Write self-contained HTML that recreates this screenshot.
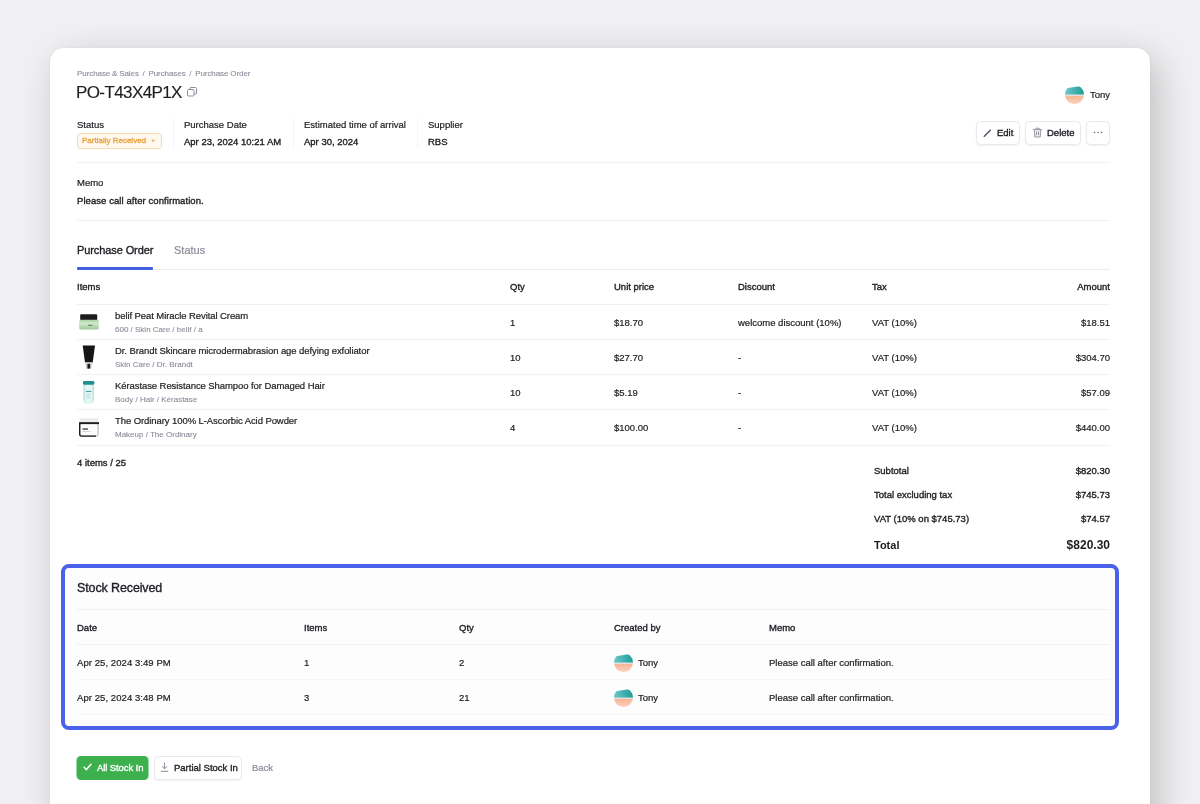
<!DOCTYPE html>
<html lang="en">
<head>
<meta charset="utf-8">
<title>Purchase Order PO-T43X4P1X</title>
<style>
*{box-sizing:border-box;margin:0;padding:0}
html,body{width:1200px;height:804px;overflow:hidden;background:#f0f0f2;font-family:"Liberation Sans",sans-serif;color:#1d1d22}
.card{position:absolute;left:50px;top:48px;width:1100px;height:900px;background:#fff;border-radius:14px;box-shadow:8px 10px 36px rgba(0,0,0,.2),0 0 3px rgba(0,0,0,.05)}
.t{position:absolute;white-space:nowrap;font-size:9.5px;line-height:12px;color:#1d1d22;-webkit-text-stroke:.2px currentColor}
.m{-webkit-text-stroke:.35px currentColor}
.g{color:#8b8b9a}
.s{font-size:8px;color:#8b8b9a;-webkit-text-stroke:.1px currentColor}
.hl{position:absolute;height:1px;background:#f1f1f3;left:77px;width:1033px}
.vl{position:absolute;width:1px;background:#f5f5f7;top:118px;height:30px}
.r{text-align:right;width:100px}
.btn{position:absolute;height:24px;border:1px solid #e9e9ed;border-radius:4.500px;background:#fff;box-shadow:0 1px 2px rgba(0,0,0,.06)}
.av{position:absolute;width:19px;height:19px;border-radius:50%;background:linear-gradient(180deg,#3aa5a6 0%,#5fc3c2 38%,#e8f2ee 47%,#f6c0a2 56%,#f6b99a 100%)}
svg{position:absolute;overflow:visible}
</style>
</head>
<body>
<div class="card"></div>
<div id="layer" style="position:absolute;left:0;top:0;width:1200px;height:804px;will-change:transform">
<svg width="0" height="0" style="left:0;top:0"><defs>
<clipPath id="avc"><circle cx="9.500" cy="9.500" r="9.500"/></clipPath>
<linearGradient id="avt" x1="0" y1="0" x2="1" y2="0"><stop offset="0" stop-color="#6fc8cb"/><stop offset=".55" stop-color="#3fb0ad"/><stop offset="1" stop-color="#1f9b96"/></linearGradient>
<linearGradient id="avp" x1="0" y1="0" x2="0" y2="1"><stop offset="0" stop-color="#f6b392"/><stop offset="1" stop-color="#fcd3bd"/></linearGradient>
<linearGradient id="jar" x1="0" y1="0" x2="0" y2="1"><stop offset="0" stop-color="#a6cfa2"/><stop offset=".35" stop-color="#d2e8ce"/><stop offset=".7" stop-color="#b5d8b0"/><stop offset="1" stop-color="#9fc99b"/></linearGradient>
<linearGradient id="bot" x1="0" y1="0" x2="1" y2="0"><stop offset="0" stop-color="#a5dad7"/><stop offset=".22" stop-color="#e6f6f5"/><stop offset=".78" stop-color="#e6f6f5"/><stop offset="1" stop-color="#a5dad7"/></linearGradient>
</defs></svg>

<!-- header -->
<div class="t s" style="left:77px;top:68px;word-spacing:-.3px;letter-spacing:-.07px">Purchase &amp; Sales&nbsp; /&nbsp; Purchases&nbsp; /&nbsp; Purchase Order</div>
<div class="t" style="left:76px;top:83px;font-size:17px;line-height:20px;letter-spacing:-.6px;-webkit-text-stroke:.15px currentColor">PO-T43X4P1X</div>
<svg style="left:187px;top:87px" width="10" height="10" viewBox="0 0 10 10" fill="none" stroke="#8b8b9a" stroke-width="1"><rect x=".5" y="2.5" width="6.5" height="6.5" rx="1"/><path d="M3 2.5V1.5a1 1 0 0 1 1-1h4.500a1 1 0 0 1 1 1V6a1 1 0 0 1-1 1H7"/></svg>

<svg style="left:1065px;top:85px" width="19" height="19" viewBox="0 0 19 19"><g clip-path="url(#avc)"><rect width="19" height="19" fill="#fff"/><path d="M0 3.600L19 .5V10H0z" fill="url(#avt)"/><rect y="10.400" width="19" height="9" fill="url(#avp)"/><rect y="9.500" width="19" height="1.200" fill="#dfe3e8"/></g></svg>
<div class="t" style="left:1090px;top:89px">Tony</div>

<div class="t" style="left:77px;top:119px">Status</div>
<div style="position:absolute;left:77px;top:133px;width:85px;height:16px;border:1px solid #f8dbb3;border-radius:3px;background:#fff8ef"></div>
<div class="t m" style="left:82px;top:135px;font-size:8px;color:#eaa544">Partially Received</div>
<svg style="left:150px;top:139px" width="6" height="4" viewBox="0 0 6 4"><path d="M1.100 .8h3.800L3 3.300z" fill="#ebaa4e"/></svg>
<div class="vl" style="left:173px"></div>
<div class="t" style="left:184px;top:119px">Purchase Date</div>
<div class="vl" style="left:293px"></div>
<div class="t" style="left:304px;top:119px">Estimated time of arrival</div>
<div class="vl" style="left:417px"></div>
<div class="t" style="left:428px;top:119px">Supplier</div>
<div class="t m" style="left:184px;top:136px">Apr 23, 2024 10:21 AM</div>
<div class="t m" style="left:304px;top:136px">Apr 30, 2024</div>
<div class="t m" style="left:428px;top:136px">RBS</div>

<!-- action buttons -->
<div class="btn" style="left:976px;top:121px;width:44px"></div>
<svg style="left:983px;top:128px" width="10" height="10" viewBox="0 0 10 10"><path d="M1.300 8.300L7.300 2.300" stroke="#5b5b66" stroke-width="1.500" stroke-linecap="round" fill="none"/><path d="M.7 9l.3-1.200.9.9z" fill="#5b5b66"/></svg>
<div class="t m" style="left:997px;top:127px">Edit</div>
<div class="btn" style="left:1025px;top:121px;width:56px"></div>
<svg style="left:1032px;top:127px" width="11" height="11" viewBox="0 0 11 11" fill="none" stroke="#9a9aa9" stroke-width="1"><path d="M2.200 2.500l.6 7.500h5.400l.6-7.500z" fill="#e9e9ee" stroke="none"/><path d="M1 2.500h9M3.800 2.500V1.200h3.400v1.300M2.200 2.500l.6 7.500h5.400l.6-7.500M4.500 4.500v3.500M6.500 4.500v3.500"/></svg>
<div class="t m" style="left:1047px;top:127px">Delete</div>
<div class="btn" style="left:1086px;top:121px;width:24px"></div>
<svg style="left:1093px;top:131px" width="10" height="3" viewBox="0 0 10 3" fill="#6b6b78"><circle cx="1.500" cy="1.500" r=".8"/><circle cx="5" cy="1.500" r=".8"/><circle cx="8.500" cy="1.500" r=".8"/></svg>

<div class="hl" style="top:162px"></div>
<div class="t" style="left:77px;top:177px">Memo</div>
<div class="t m" style="left:77px;top:195px;letter-spacing:.07px">Please call after confirmation.</div>
<div class="hl" style="top:220px"></div>

<!-- tabs -->
<div class="t m" style="left:77px;top:243px;font-size:11px;line-height:14px;letter-spacing:-.1px">Purchase Order</div>
<div class="t g" style="left:174px;top:243px;font-size:11px;line-height:14px">Status</div>
<div class="hl" style="top:269px;background:#ededf0"></div>
<div style="position:absolute;left:77px;top:266.500px;width:76px;height:3px;background:#4360df;border-radius:1px"></div>

<!-- items table -->
<div class="t m" style="left:77px;top:281px">Items</div>
<div class="t m" style="left:510px;top:281px">Qty</div>
<div class="t m" style="left:614px;top:281px">Unit price</div>
<div class="t m" style="left:738px;top:281px">Discount</div>
<div class="t m" style="left:872px;top:281px">Tax</div>
<div class="t m r" style="left:1010px;top:281px">Amount</div>
<div class="hl" style="top:304px"></div>

<!-- thumbnails -->
<svg style="left:79px;top:314px" width="20" height="16" viewBox="0 0 20 16"><rect x="1.200" y=".3" width="17" height="6" rx="1" fill="#1b1c1b"/><rect x=".2" y="5.800" width="19.600" height="9.700" rx="1.500" fill="url(#jar)"/><rect x="9" y="10.800" width="4.500" height="1" fill="#4c8853"/></svg>
<svg style="left:82px;top:345px" width="14" height="24" viewBox="0 0 14 24"><path d="M.7 .4H13L10.700 17.600H3z" fill="#161616"/><rect x="3" y="17.400" width="7.700" height="1.400" fill="#d6d6d6"/><rect x="4" y="18.800" width="5.600" height="4.800" fill="#c9c9c9"/><rect x="5.500" y="18.800" width="2.600" height="4.800" fill="#1a1a1a"/></svg>
<svg style="left:82px;top:380px" width="14" height="25" viewBox="0 0 14 25"><path d="M1.500 4.400h10.300v12q0 6-2 7.600h-6.300q-2-1.600-2-7.600z" fill="url(#bot)"/><rect x="1" y="1" width="11.300" height="3.700" rx="1.200" fill="#1f908b"/><rect x="3.800" y="10.900" width="5.600" height=".9" fill="#2e8f8a"/><rect x="4.500" y="13" width="4.200" height="6" fill="#c4e4e3" opacity=".7"/></svg>
<svg style="left:79px;top:418px" width="20" height="19" viewBox="0 0 20 19"><rect x=".8" y=".2" width="18.400" height="4.500" rx=".8" fill="#ebebeb"/><rect x=".7" y="5.300" width="18.400" height="12.800" rx="2" fill="#fbfbfb" stroke="#777" stroke-width=".6"/><path d="M.7 5.300V16.100a2 2 0 0 0 2 2H17" fill="none" stroke="#1c1c1c" stroke-width="1.400"/><rect x="0" y="4.200" width="20" height="1.900" fill="#1c1c1c"/><rect x="3.500" y="10.400" width="5.500" height="1.300" fill="#3a3a3a"/><rect x="3.500" y="13.300" width="8" height=".7" fill="#c8c8c8"/></svg>
<!-- row 1 -->
<div class="t" style="left:115px;top:310px;letter-spacing:-.08px">belif Peat Miracle Revital Cream</div>
<div class="t s" style="left:115px;top:324px">600 / Skin Care / belif / a</div>
<div class="t" style="left:510px;top:317px">1</div>
<div class="t" style="left:614px;top:317px">$18.70</div>
<div class="t" style="left:738px;top:317px">welcome discount (10%)</div>
<div class="t" style="left:872px;top:317px">VAT (10%)</div>
<div class="t r" style="left:1010px;top:317px">$18.51</div>
<div class="hl" style="top:339px"></div>
<!-- row 2 -->
<div class="t" style="left:115px;top:345px;letter-spacing:-.08px">Dr. Brandt Skincare microdermabrasion age defying exfoliator</div>
<div class="t s" style="left:115px;top:359px">Skin Care / Dr. Brandt</div>
<div class="t" style="left:510px;top:352px">10</div>
<div class="t" style="left:614px;top:352px">$27.70</div>
<div class="t" style="left:738px;top:352px">-</div>
<div class="t" style="left:872px;top:352px">VAT (10%)</div>
<div class="t r" style="left:1010px;top:352px">$304.70</div>
<div class="hl" style="top:374px"></div>
<!-- row 3 -->
<div class="t" style="left:115px;top:380px;letter-spacing:-.08px">Kérastase Resistance Shampoo for Damaged Hair</div>
<div class="t s" style="left:115px;top:394px">Body / Hair / Kérastase</div>
<div class="t" style="left:510px;top:387px">10</div>
<div class="t" style="left:614px;top:387px">$5.19</div>
<div class="t" style="left:738px;top:387px">-</div>
<div class="t" style="left:872px;top:387px">VAT (10%)</div>
<div class="t r" style="left:1010px;top:387px">$57.09</div>
<div class="hl" style="top:409px"></div>
<!-- row 4 -->
<div class="t" style="left:115px;top:415px;letter-spacing:-.08px">The Ordinary 100% L-Ascorbic Acid Powder</div>
<div class="t s" style="left:115px;top:429px">Makeup / The Ordinary</div>
<div class="t" style="left:510px;top:422px">4</div>
<div class="t" style="left:614px;top:422px">$100.00</div>
<div class="t" style="left:738px;top:422px">-</div>
<div class="t" style="left:872px;top:422px">VAT (10%)</div>
<div class="t r" style="left:1010px;top:422px">$440.00</div>
<div class="hl" style="top:445px"></div>

<div class="t m" style="left:77px;top:457px">4 items / 25</div>

<!-- totals -->
<div class="t m" style="left:874px;top:465px">Subtotal</div>
<div class="t m r" style="left:1010px;top:465px">$820.30</div>
<div class="t m" style="left:874px;top:489px">Total excluding tax</div>
<div class="t m r" style="left:1010px;top:489px">$745.73</div>
<div class="t m" style="left:874px;top:513px">VAT (10% on $745.73)</div>
<div class="t m r" style="left:1010px;top:513px">$74.57</div>
<div class="t" style="left:874px;top:538px;font-size:11px;line-height:14px;font-weight:bold;-webkit-text-stroke:0">Total</div>
<div class="t r" style="left:1010px;top:538px;font-size:12px;line-height:14px;font-weight:bold;-webkit-text-stroke:0">$820.30</div>

<!-- stock received -->
<div style="position:absolute;left:61px;top:564px;width:1058px;height:166px;border:4px solid #4b61ea;border-radius:8px;background:#fdfdfe"></div>
<div class="t" style="left:77px;top:580px;font-size:12.500px;line-height:16px;letter-spacing:-.12px;-webkit-text-stroke:.35px currentColor">Stock Received</div>
<div class="hl" style="top:609px"></div>
<div class="t m" style="left:77px;top:622px">Date</div>
<div class="t m" style="left:304px;top:622px">Items</div>
<div class="t m" style="left:459px;top:622px">Qty</div>
<div class="t m" style="left:614px;top:622px">Created by</div>
<div class="t m" style="left:769px;top:622px">Memo</div>
<div class="hl" style="top:644px"></div>
<div class="t" style="left:77px;top:657px;letter-spacing:.07px">Apr 25, 2024 3:49 PM</div>
<div class="t" style="left:304px;top:657px">1</div>
<div class="t" style="left:459px;top:657px">2</div>
<svg style="left:613.5px;top:653px" width="19" height="19" viewBox="0 0 19 19"><g clip-path="url(#avc)"><rect width="19" height="19" fill="#fff"/><path d="M0 3.600L19 .5V10H0z" fill="url(#avt)"/><rect y="10.400" width="19" height="9" fill="url(#avp)"/><rect y="9.500" width="19" height="1.200" fill="#dfe3e8"/></g></svg>
<div class="t" style="left:638px;top:657px">Tony</div>
<div class="t" style="left:769px;top:657px">Please call after confirmation.</div>
<div class="hl" style="top:679px;background:#f6f6f8"></div>
<div class="t" style="left:77px;top:692px;letter-spacing:.07px">Apr 25, 2024 3:48 PM</div>
<div class="t" style="left:304px;top:692px">3</div>
<div class="t" style="left:459px;top:692px">21</div>
<svg style="left:613.5px;top:688px" width="19" height="19" viewBox="0 0 19 19"><g clip-path="url(#avc)"><rect width="19" height="19" fill="#fff"/><path d="M0 3.600L19 .5V10H0z" fill="url(#avt)"/><rect y="10.400" width="19" height="9" fill="url(#avp)"/><rect y="9.500" width="19" height="1.200" fill="#dfe3e8"/></g></svg>
<div class="t" style="left:638px;top:692px">Tony</div>
<div class="t" style="left:769px;top:692px">Please call after confirmation.</div>
<div class="hl" style="top:714px;background:#f6f6f8"></div>

<!-- bottom buttons -->
<div style="position:absolute;left:76px;top:756px;width:73px;height:24px;border-radius:4.500px;background:#3bb04c;border:solid rgba(59,176,76,.5);border-width:0 1px;background-clip:padding-box"></div>
<svg style="left:83px;top:763px" width="9" height="8" viewBox="0 0 9 8" fill="none" stroke="#fff" stroke-width="1.500" stroke-linecap="round" stroke-linejoin="round"><path d="M1 4.200L3.400 6.600L8 1.200"/></svg>
<div class="t m" style="left:97px;top:762px;color:#fff;letter-spacing:-.1px">All Stock In</div>
<div class="btn" style="left:154px;top:756px;width:88px"></div>
<svg style="left:160px;top:762px" width="9" height="10" viewBox="0 0 9 10" fill="none" stroke="#8d8d9b" stroke-width="1" stroke-linecap="round" stroke-linejoin="round"><path d="M4.500 1v5.600M2.100 4.400l2.400 2.400 2.400-2.400M1.200 9.300h6.600"/></svg>
<div class="t m" style="left:174px;top:762px">Partial Stock In</div>
<div class="t g" style="left:252px;top:762px">Back</div>

</div>
</body>
</html>
